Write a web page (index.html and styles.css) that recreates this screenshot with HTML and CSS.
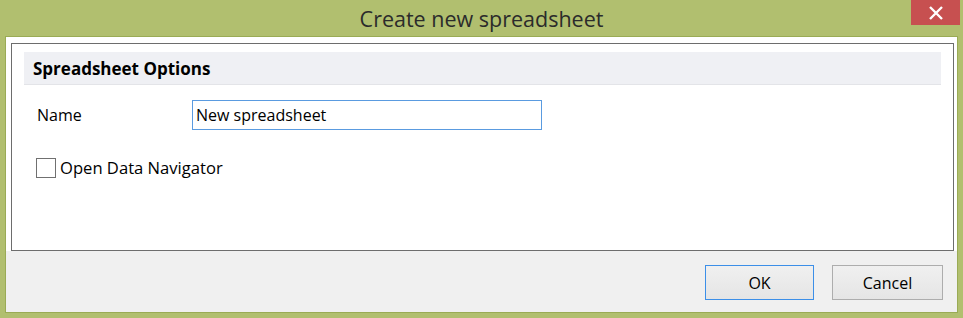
FILE: index.html
```html
<!DOCTYPE html>
<html>
<head>
<meta charset="utf-8">
<link rel="stylesheet" href="styles.css">
</head>
<body>
<div class="titlebar">
  <div class="title">Create new spreadsheet</div>
  <div class="close">
    <svg width="16" height="14" viewBox="0 0 16 14"><path d="M2 1 L14 13 M14 1 L2 13" stroke="#fff" stroke-width="2.4" fill="none"/></svg>
  </div>
</div>
<div class="window">
  <div class="content">
    <div class="panel">
      <div class="section-head">Spreadsheet Options</div>
      <div class="row name-row">
        <label class="label">Name</label>
        <div class="input">New spreadsheet</div>
      </div>
      <div class="row check-row">
        <span class="checkbox"></span>
        <span class="check-label">Open Data Navigator</span>
      </div>
    </div>
  </div>
  <div class="footer">
    <div class="btn btn-ok">OK</div>
    <div class="btn btn-cancel">Cancel</div>
  </div>
</div>
</body>
</html>
```
FILE: styles.css
```css
html, body {
  margin: 0;
  padding: 0;
}
body {
  width: 963px;
  height: 318px;
  background: #b1bf6f;
  font-family: "Open Sans", "Noto Sans", sans-serif;
  color: #000;
  overflow: hidden;
  position: relative;
}
.titlebar {
  height: 36px;
  display: flex;
  justify-content: center;
  align-items: center;
}
.title {
  font-size: 21.5px;
  color: #2b2b2b;
  padding-top: 1px;
}
.close {
  position: absolute;
  top: 0;
  left: 911px;
  width: 49px;
  height: 25px;
  background: #c75050;
  display: flex;
  justify-content: center;
  align-items: center;
}
.window {
  margin: 0 5px;
  border: 1px solid #9aab55;
  height: 275px;
  display: flex;
  flex-direction: column;
}
.content {
  background: #fff;
  padding: 6px 3px 0 5px;
}
.panel {
  border: 1px solid #6d6d6d;
  height: 198px;
  padding: 8px 12px 0 12px;
}
.section-head {
  background: #eff0f4;
  border-bottom: 1px solid #e3e4e8;
  height: 32px;
  font-weight: bold;
  font-size: 17px;
  display: flex;
  align-items: center;
  padding-left: 9px;
}
.row {
  display: flex;
  align-items: center;
  font-size: 16px;
}
.name-row {
  margin-top: 15px;
}
.label {
  width: 155px;
  padding-left: 13px;
}
.input {
  border: 1px solid #5a9be0;
  display: flex;
  align-items: center;
  padding-left: 3px;
  padding-bottom: 1px;
  box-sizing: border-box;
  width: 350px;
  height: 30px;
}
.check-row {
  margin-top: 26px;
  padding-left: 12px;
}
.check-label {
  font-size: 16.6px;
}
.checkbox {
  width: 18px;
  height: 18px;
  border: 1px solid #707070;
  background: #fff;
  margin-right: 4px;
}
.footer {
  flex: 1;
  background: #f0f0f0;
  display: flex;
  justify-content: flex-end;
  align-items: flex-start;
  padding-top: 14px;
  padding-right: 14px;
  gap: 18px;
}
.btn {
  width: 107px;
  height: 33px;
  border: 1px solid #adadad;
  background: linear-gradient(#f0f0f0, #e5e5e5);
  display: flex;
  justify-content: center;
  align-items: center;
  font-size: 16px;
}
.btn-ok {
  border-color: #3c8fe8;
}
.btn-cancel {
  width: 109px;
}
```
